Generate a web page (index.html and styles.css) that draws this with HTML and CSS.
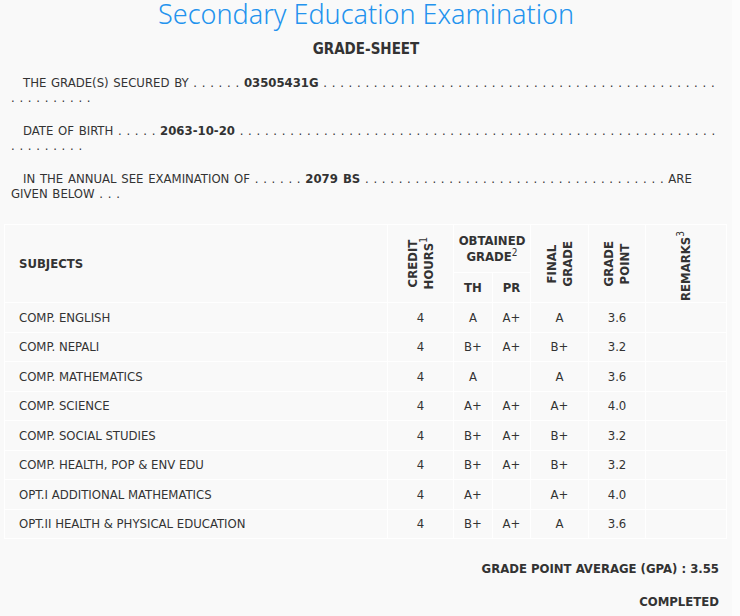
FILE: index.html
```html
<!DOCTYPE html>
<html lang="en">
<head>
<meta charset="utf-8">
<title>Grade Sheet</title>
<link rel="stylesheet" href="styles.css">
</head>
<body>
<div class="page">
  <h1 class="title">Secondary Education Examination</h1>
  <h2 class="subtitle">GRADE-SHEET</h2>

  <p class="line">THE GRADE(S) SECURED BY . . . . . . <b>03505431G</b> . . . . . . . . . . . . . . . . . . . . . . . . . . . . . . . . . . . . . . . . . . . . . . . . . . . . . . . . .</p>
  <p class="line">DATE OF BIRTH . . . . . <b>2063-10-20</b> . . . . . . . . . . . . . . . . . . . . . . . . . . . . . . . . . . . . . . . . . . . . . . . . . . . . . . . . . . . . . . . . . .</p>
  <p class="line">IN THE ANNUAL SEE EXAMINATION OF . . . . . . <b>2079 BS</b> . . . . . . . . . . . . . . . . . . . . . . . . . . . . . . . . . . . . ARE GIVEN BELOW . . .</p>

  <table class="grades">
    <colgroup>
      <col class="c-subj"><col class="c-credit"><col class="c-th"><col class="c-pr"><col class="c-final"><col class="c-point"><col class="c-rem">
    </colgroup>
    <thead>
      <tr class="h1">
        <th rowspan="2" class="subj">SUBJECTS</th>
        <th rowspan="2"><span class="vert">CREDIT<br>HOURS<sup>1</sup></span></th>
        <th colspan="2" class="obt">OBTAINED<br>GRADE<sup>2</sup></th>
        <th rowspan="2"><span class="vert">FINAL<br>GRADE</span></th>
        <th rowspan="2"><span class="vert">GRADE<br>POINT</span></th>
        <th rowspan="2" class="rem"><span class="vert">REMARKS<sup>3</sup></span></th>
      </tr>
      <tr class="h2">
        <th>TH</th>
        <th>PR</th>
      </tr>
    </thead>
    <tbody>
      <tr><td class="subj">COMP. ENGLISH</td><td>4</td><td>A</td><td>A+</td><td>A</td><td>3.6</td><td></td></tr>
      <tr><td class="subj">COMP. NEPALI</td><td>4</td><td>B+</td><td>A+</td><td>B+</td><td>3.2</td><td></td></tr>
      <tr><td class="subj">COMP. MATHEMATICS</td><td>4</td><td>A</td><td></td><td>A</td><td>3.6</td><td></td></tr>
      <tr><td class="subj">COMP. SCIENCE</td><td>4</td><td>A+</td><td>A+</td><td>A+</td><td>4.0</td><td></td></tr>
      <tr><td class="subj">COMP. SOCIAL STUDIES</td><td>4</td><td>B+</td><td>A+</td><td>B+</td><td>3.2</td><td></td></tr>
      <tr><td class="subj">COMP. HEALTH, POP &amp; ENV EDU</td><td>4</td><td>B+</td><td>A+</td><td>B+</td><td>3.2</td><td></td></tr>
      <tr><td class="subj">OPT.I ADDITIONAL MATHEMATICS</td><td>4</td><td>A+</td><td></td><td>A+</td><td>4.0</td><td></td></tr>
      <tr><td class="subj">OPT.II HEALTH &amp; PHYSICAL EDUCATION</td><td>4</td><td>B+</td><td>A+</td><td>A</td><td>3.6</td><td></td></tr>
    </tbody>
  </table>

  <p class="gpa">GRADE POINT AVERAGE (GPA) : 3.55</p>
  <p class="status">COMPLETED</p>
</div>
</body>
</html>
```

FILE: styles.css
```css
html, body {
  margin: 0;
  padding: 0;
}
body {
  background: #fcfcfc;
  font-family: "DejaVu Sans Condensed", "DejaVu Sans", sans-serif;
  font-size: 13px;
  color: #333;
}
.page {
  width: 732px;
  min-height: 616px;
  background: #f9f9f9;
  overflow: hidden;
}
.title {
  margin: 0;
  font-family: "Noto Sans", "DejaVu Sans", sans-serif;
  font-weight: 300;
  font-size: 27px;
  line-height: 26px;
  padding-top: 1px;
  color: #2393ee;
  text-align: center;
}
.subtitle {
  margin: 12px 0 0;
  font-size: 15px;
  line-height: 20px;
  font-weight: bold;
  text-align: center;
  color: #333;
}
.line {
  margin: 18px 10px 0 11px;
  line-height: 15px;
  text-indent: 12px;
  word-spacing: 1px;
}
.line:first-of-type {
  margin-top: 16px;
}
.grades {
  margin: 23px 0 0 4px;
  width: 722px;
  table-layout: fixed;
  border-collapse: collapse;
}
.c-subj { width: 383px; }
.c-credit { width: 66px; }
.c-th { width: 39px; }
.c-pr { width: 38px; }
.c-final { width: 58px; }
.c-point { width: 57px; }
.c-rem { width: 81px; }
.grades th, .grades td {
  border: 1px solid #fff;
  padding: 0;
  text-align: center;
  vertical-align: middle;
}
.grades th {
  font-size: 13px;
  font-weight: bold;
  line-height: 16px;
}
.grades .h1 th { height: 47px; }
.grades .h2 th { height: 29px; }
.grades th.subj, .grades td.subj {
  text-align: left;
  padding-left: 14px;
}
.grades td {
  height: 28.5px;
  line-height: 15px;
}
.vert {
  display: inline-block;
  vertical-align: top;
  writing-mode: vertical-rl;
  transform: rotate(180deg);
  line-height: 16px;
  text-align: center;
}
.grades th.rem {
  vertical-align: top;
  padding-top: 6px;
}
sup {
  font-size: 10px;
  font-weight: normal;
  line-height: 0;
  vertical-align: 5px;
}
.gpa, .status {
  margin: 0;
  padding-right: 13px;
  text-align: right;
  font-weight: bold;
  line-height: 15px;
}
.gpa { margin-top: 22px; }
.status { margin-top: 18px; }
```
